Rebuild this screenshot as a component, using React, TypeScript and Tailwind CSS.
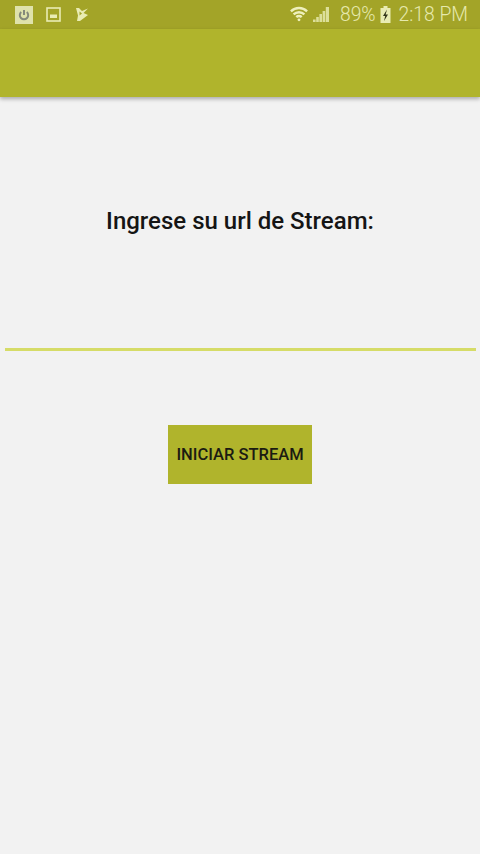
import React from 'react';

const StatusIcons = () => (
  <div className="flex items-center">
    {/* power saving */}
    <div className="w-[18px] h-[18px] bg-[#dfe2ab] flex items-center justify-center ml-[15px]">
      <svg width="12" height="12" viewBox="0 0 12 12" fill="none" stroke="#85897a" strokeWidth="2">
        <path d="M3.2 3a4.2 4.2 0 1 0 5.6 0" />
        <path d="M6 1v5" />
      </svg>
    </div>
    {/* picture */}
    <svg className="ml-[13px]" width="15" height="15" viewBox="0 0 15 15" fill="none">
      <rect x="1" y="1" width="13" height="13" stroke="#e9ecb4" strokeWidth="1.6" />
      <rect x="4" y="7.5" width="7" height="3.5" fill="#e9ecb4" />
    </svg>
    {/* notification */}
    <svg className="ml-[14px]" width="15" height="15" viewBox="0 0 15 15" fill="#e9ecb4">
      <path d="M1 1h3l3 3 6-2.5-4.5 4.500L13 8l-8 6H2l1-5.500z" />
      <path d="M4.500 4.500 7 6.500 4.500 8.500z" fill="#a3a428" />
    </svg>
  </div>
);

const StatusRight = () => (
  <div className="flex items-center text-[#e6e9ad] text-[19.3px] leading-none [font-family:Roboto,sans-serif] font-light">
    <svg width="18" height="16" viewBox="0 0 20 17" fill="none" stroke="#eef0bd" strokeWidth="2.6">
      <path d="M1 5.500a13 13 0 0 1 18 0" />
      <path d="M4 9a8.500 8.500 0 0 1 12 0" />
      <path d="M7 12a4.200 4.200 0 0 1 6 0" />
      <circle cx="10" cy="15" r="1.600" fill="#eef0bd" stroke="none" />
    </svg>
    {/* signal bars */}
    <svg className="ml-[5px]" width="16" height="15" viewBox="0 0 16 15" fill="#dcdf9a">
      <path d="M0 12.500h2.600V15H0zM3.200 10h2.600v5H3.200zM6.400 7h2.600v8H6.400zM9.600 4h2.600v11H9.600zM12.800 0H16v15h-3.200z" />
    </svg>
    <span className="ml-[11px]">89%</span>
    <svg className="ml-[4px]" width="11" height="17" viewBox="0 0 11 17">
      <rect x="3.500" y="0" width="4" height="2" fill="#e9ecb4" />
      <rect x="0.500" y="2" width="10" height="15" fill="#e9ecb4" />
      <path d="M7 3.500 3 10h2.200L4 15l4-6.500H5.600z" fill="#33351a" />
    </svg>
    <span className="ml-[8px] mr-[12px]">2:18 PM</span>
  </div>
);

export default function App() {
  return (
    <div className="w-[480px] h-[854px] bg-[#f2f2f2] flex flex-col [font-family:Roboto,sans-serif] overflow-hidden">
      <div className="h-[29px] bg-[#a3a428] flex items-center justify-between">
        <StatusIcons />
        <StatusRight />
      </div>
      <div className="h-[68px] bg-[#b0b42c] shadow-[0_2px_4px_rgba(0,0,0,0.3)]" />
      <div className="flex flex-col items-center">
        <h1 className="mt-[108px] h-[32px] text-[24px] leading-[32px] font-medium text-[#151515]">Ingrese su url de Stream:</h1>
        <div className="mt-[111px] w-[471px] h-[3px] bg-[#d6dc68]" />
        <button className="mt-[74px] w-[144px] h-[59px] pt-[2px] bg-[#b0b42c] text-[#1b1b12] text-[16.500px] font-medium flex items-center justify-center">
          INICIAR STREAM
        </button>
      </div>
    </div>
  );
}
